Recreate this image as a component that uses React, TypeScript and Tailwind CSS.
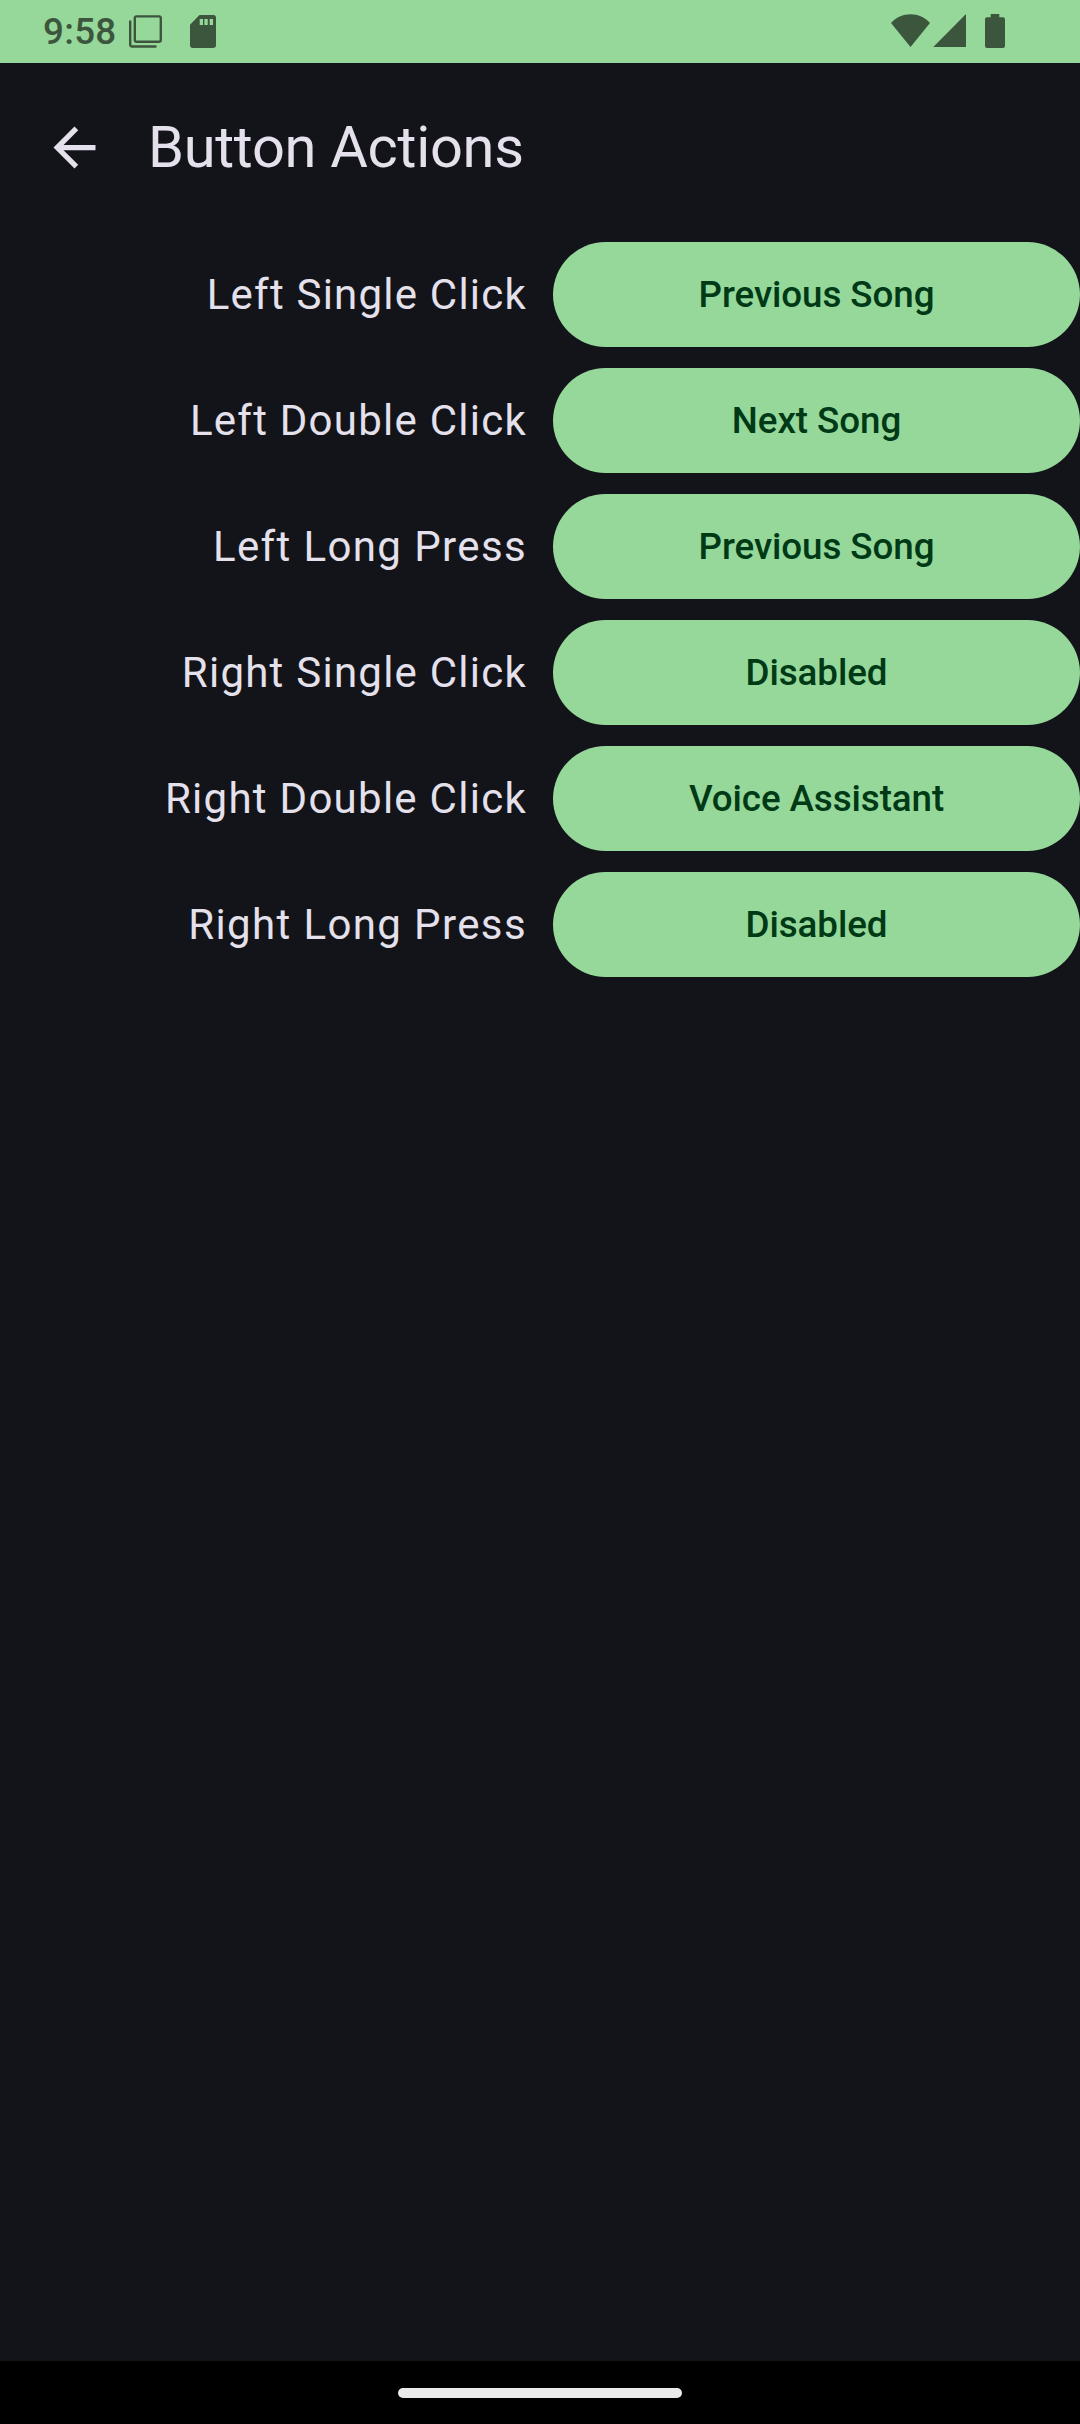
const actions = [
  { label: "Left Single Click", action: "Previous Song", tracking: "tracking-[1.22px]" },
  { label: "Left Double Click", action: "Next Song", tracking: "tracking-[1.25px]" },
  { label: "Left Long Press", action: "Previous Song", tracking: "tracking-[1.38px]" },
  { label: "Right Single Click", action: "Disabled", tracking: "tracking-[1.24px]" },
  { label: "Right Double Click", action: "Voice Assistant", tracking: "tracking-[1.27px]" },
  { label: "Right Long Press", action: "Disabled", tracking: "tracking-[1.38px]" },
];

function StatusBar() {
  return (
    <div className="flex h-[63px] shrink-0 items-start bg-[#95d89a] pl-[43px] pr-[75px] text-[#3c563e]">
      <span className="mt-[10px] w-[85px] whitespace-nowrap text-[36.75px] font-medium leading-[43px] tracking-[0.3px]">9:58</span>
      <svg className="mt-[14px] h-[35px] w-[35px]" viewBox="0 0 35 35" fill="none" stroke="currentColor" strokeWidth="2.4">
        <rect x="6.8" y="2.4" width="26" height="25.3" rx="1.8" />
        <path d="M2.2 6.5V30.7a1.8 1.8 0 0 0 1.8 1.8H28.5" />
      </svg>
      <svg className="ml-[27px] mt-[15px] h-[33px] w-[26px]" viewBox="0 0 26 33" fill="currentColor">
        <path
          fillRule="evenodd"
          d="M9.5 0H23.500a2.500 2.500 0 0 1 2.500 2.500V30a3 3 0 0 1-3 3H3a3 3 0 0 1-3-3V9.700zM9.700 4v6h3.300V4zM14.400 4v6h3.300V4zM19.700 4v6h3.300V4z"
        />
      </svg>
      <div className="ml-auto flex items-start">
        <svg className="mt-[14px] h-[33px] w-[39px]" viewBox="0 0 39 33" fill="currentColor">
          <path d="M19.500 33L0 9C5 3.500 12 .2 19.500 .2S34 3.500 39 9z" />
        </svg>
        <svg className="ml-[3px] mt-[14px] h-[33px] w-[33px]" viewBox="0 0 33 33" fill="currentColor">
          <path d="M33 0V33H0.300z" />
        </svg>
        <svg className="ml-[19px] mt-[14px] h-[34px] w-5" viewBox="0 0 20 34" fill="currentColor">
          <path d="M5.700 0H14.300V3.300H18a2 2 0 0 1 2 2V32a2 2 0 0 1-2 2H2a2 2 0 0 1-2-2V5.300a2 2 0 0 1 2-2H5.700z" />
        </svg>
      </div>
    </div>
  );
}

export default function App() {
  return (
    <div className="flex h-[2424px] w-[1080px] flex-col overflow-hidden bg-[#131419] font-[Roboto,sans-serif] text-[#e4e1ec]">
      <StatusBar />
      <header className="flex h-[168px] shrink-0 items-center pl-[43px]">
        <button aria-label="Back" className="h-[63px] w-[63px]">
          <svg className="h-full w-full" viewBox="0 0 24 24" fill="currentColor">
            <path d="M20 11H7.830l5.590-5.590L12 4l-8 8 8 8 1.410-1.410L7.830 13H20v-2z" />
          </svg>
        </button>
        <h1 className="ml-[42px] whitespace-nowrap text-[57.75px] leading-[74px] tracking-[-0.28px]">Button Actions</h1>
      </header>
      <main className="flex grow flex-col gap-[21px] pt-[11px]">
        {actions.map(({ label, action, tracking }) => (
          <div key={label} className="flex h-[105px] items-center gap-[26px]">
            <span className={`w-[527px] whitespace-nowrap text-right text-[42px] leading-[63px] ${tracking}`}>
              {label}
            </span>
            <button className="h-full w-[527px] rounded-full bg-[#95d89a] text-[36.75px] font-medium leading-[53px] tracking-[-0.08px] text-[#003916]">
              {action}
            </button>
          </div>
        ))}
      </main>
      <footer className="flex h-[63px] shrink-0 justify-center bg-black pt-[27px]">
        <div className="h-2.5 w-[284px] rounded-full bg-[#ebebeb]" />
      </footer>
    </div>
  );
}
